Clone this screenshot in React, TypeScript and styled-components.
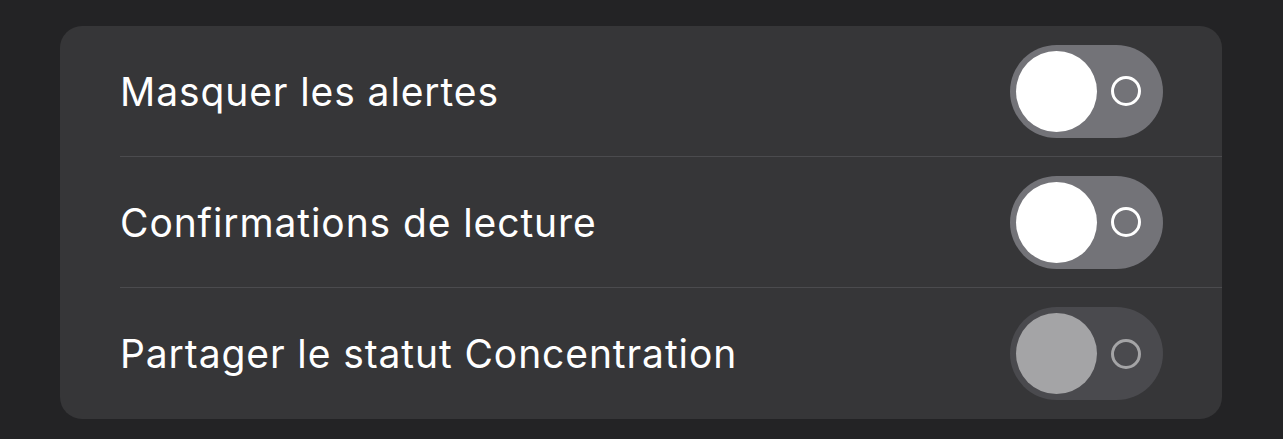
import React from "react";
import styled, { createGlobalStyle } from "styled-components";

const Global = createGlobalStyle`
  html, body { margin: 0; padding: 0; background: #232325; }
  body { font-family: Inter, "Noto Sans", sans-serif; -webkit-font-smoothing: antialiased; }
`;

const Page = styled.div`
  width: 1283px;
  height: 439px;
  box-sizing: border-box;
  padding: 26px 61px 21px 60px;
  background: #232325;
`;

const Card = styled.div`
  background: #363638;
  border-radius: 22px;
  padding-left: 60px;
  display: flex;
  flex-direction: column;
`;

const Row = styled.div<{ $last?: boolean }>`
  height: 131px;
  box-sizing: border-box;
  display: flex;
  align-items: center;
  justify-content: space-between;
  padding-right: 59px;
  border-bottom: ${(p) => (p.$last ? "none" : "1px solid #4b4b4e")};
`;

const Label = styled.span`
  color: #ffffff;
  font-size: 39px;
  letter-spacing: 0.9px;
  font-weight: 400;
`;

const Track = styled.div<{ $disabled?: boolean }>`
  width: 153px;
  height: 93px;
  border-radius: 47px;
  box-sizing: border-box;
  padding: 6px;
  display: flex;
  align-items: center;
  background: ${(p) => (p.$disabled ? "#4a4a4e" : "#737378")};
`;

const Knob = styled.div<{ $disabled?: boolean }>`
  width: 81px;
  height: 81px;
  border-radius: 50%;
  background: ${(p) => (p.$disabled ? "#a4a4a6" : "#ffffff")};
`;

const Off = styled.div<{ $disabled?: boolean }>`
  margin-left: 14px;
  width: 30px;
  height: 30px;
  box-sizing: border-box;
  border-radius: 50%;
  border: 3px solid ${(p) => (p.$disabled ? "#a4a4a6" : "#ffffff")};
`;

const Toggle = ({ disabled }: { disabled?: boolean }) => (
  <Track $disabled={disabled}>
    <Knob $disabled={disabled} />
    <Off $disabled={disabled} />
  </Track>
);

const items = [
  { label: "Masquer les alertes" },
  { label: "Confirmations de lecture" },
  { label: "Partager le statut Concentration", disabled: true },
];

export default function App() {
  return (
    <Page>
      <Global />
      <Card>
        {items.map((it, i) => (
          <Row key={it.label} $last={i === items.length - 1}>
            <Label>{it.label}</Label>
            <Toggle disabled={it.disabled} />
          </Row>
        ))}
      </Card>
    </Page>
  );
}
